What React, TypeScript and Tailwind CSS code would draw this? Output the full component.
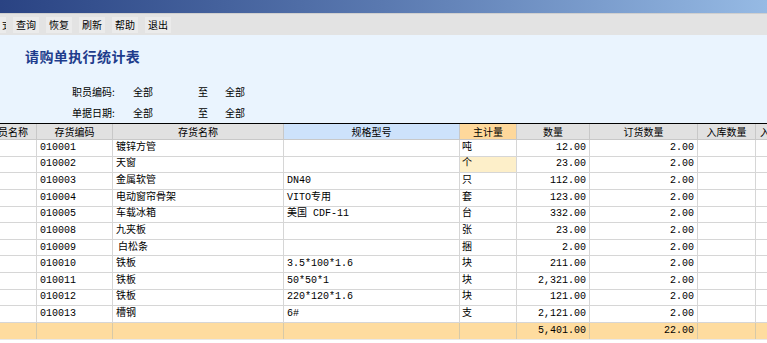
import React from "react"

const cols = ["w-[37px]", "w-[76px]", "w-[171px]", "w-[176px]", "w-[57px]", "w-[73px]", "w-[108px]", "w-[58px]", "w-[60px]"]

const heads = ["职员名称", "存货编码", "存货名称", "规格型号", "主计量", "数量", "订货数量", "入库数量", "入库金额"]

const rows = [
  ["010001", "镀锌方管", "", "吨", "12.00", "2.00"],
  ["010002", "天窗", "", "个", "23.00", "2.00"],
  ["010003", "金属软管", "DN40", "只", "112.00", "2.00"],
  ["010004", "电动窗帘骨架", "VITO专用", "套", "123.00", "2.00"],
  ["010005", "车载冰箱", "美国 CDF-11", "台", "332.00", "2.00"],
  ["010008", "九夹板", "", "张", "23.00", "2.00"],
  ["010009", "白松条", "", "捆", "2.00", "2.00"],
  ["010010", "铁板", "3.5*100*1.6", "块", "211.00", "2.00"],
  ["010011", "铁板", "50*50*1", "块", "2,321.00", "2.00"],
  ["010012", "铁板", "220*120*1.6", "块", "121.00", "2.00"],
  ["010013", "槽钢", "6#", "支", "2,121.00", "2.00"],
]

const tools = ["查询", "恢复", "刷新", "帮助", "退出"]

export default function App() {
  return (
    <div className="w-[767px] h-[343px] overflow-hidden bg-white flex flex-col text-black font-['Noto_Sans_CJK_SC',sans-serif]">
      {/* title bar */}
      <div className="h-[13px] shrink-0 bg-gradient-to-r from-[#2a4383] via-[#5a79b0] to-[#96bae4]" />

      {/* toolbar */}
      <div className="h-[22px] shrink-0 bg-[#e3e3e3] border-t border-[#cfcfcf] flex items-center gap-[7px] text-[10px] leading-none">
        <div className="w-[6px] h-[16px] bg-[#ebebeb] flex items-center justify-end overflow-hidden">
          <span className="shrink-0 -mr-[6px]">式</span>
        </div>
        {tools.map(t => (
          <div key={t} className="w-[26px] h-[16px] bg-[#ebebeb] flex items-center justify-center">
            {t}
          </div>
        ))}
      </div>

      {/* report header */}
      <div className="h-[88px] shrink-0 bg-[#eaf4fe] flex flex-col">
        <div className="pl-[25px] pt-[12px] text-[14px] font-bold text-[#1e3c8c] leading-[18px] tracking-[0.4px]">请购单执行统计表</div>
        <div className="flex flex-col gap-[9px] mt-[21px] text-[10px] leading-[12px]">
          <div className="flex">
            <span className="ml-[72px] w-[61px]">职员编码:</span>
            <span className="w-[65px]">全部</span>
            <span className="w-[27px]">至</span>
            <span>全部</span>
          </div>
          <div className="flex">
            <span className="ml-[72px] w-[61px]">单据日期:</span>
            <span className="w-[65px]">全部</span>
            <span className="w-[27px]">至</span>
            <span>全部</span>
          </div>
        </div>
      </div>

      {/* grid */}
      <div className="flex-1 border-t border-black overflow-hidden">
        <div className="flex h-[16px] text-[10px] leading-none">
          {heads.map((h, i) => (
            <div
              key={h}
              className={`${cols[i]} shrink-0 border-r border-b border-[#c8c8c8] flex items-center overflow-hidden ${i === 0 ? "justify-end pr-[8px]" : i === 8 ? "justify-start pl-[4px]" : "justify-center"} ${i === 3 ? "bg-[#cde2fb]" : i === 4 ? "bg-[#fed89b]" : "bg-[#e1e1e1]"}`}
            >
              <span className="whitespace-nowrap shrink-0">{i === 0 ? "员名称" : h}</span>
            </div>
          ))}
        </div>
        {rows.map((r, ri) => (
          <div key={ri} className="flex h-[16.64px] text-[10px] leading-none font-['Liberation_Mono','Noto_Sans_CJK_SC',monospace]">
            <div className={`${cols[0]} shrink-0 border-r border-b border-[#d6d6d6]`} />
            <div className={`${cols[1]} shrink-0 border-r border-b border-[#d6d6d6] flex items-center pl-[3px]`}>{r[0]}</div>
            <div className={`${cols[2]} shrink-0 border-r border-b border-[#d6d6d6] flex items-center ${ri === 6 ? "pl-[5px]" : "pl-[3px]"}`}>{r[1]}</div>
            <div className={`${cols[3]} shrink-0 border-r border-b border-[#d6d6d6] flex items-center pl-[3px]`}>{r[2]}</div>
            <div className={`${cols[4]} shrink-0 border-r border-b border-[#d6d6d6] flex items-center pl-[2px] ${ri === 1 ? "bg-[#fdefc9]" : ""}`}>{r[3]}</div>
            <div className={`${cols[5]} shrink-0 border-r border-b border-[#d6d6d6] flex items-center justify-end pr-[3px]`}>{r[4]}</div>
            <div className={`${cols[6]} shrink-0 border-r border-b border-[#d6d6d6] flex items-center justify-end pr-[3px]`}>{r[5]}</div>
            <div className={`${cols[7]} shrink-0 border-r border-b border-[#d6d6d6]`} />
            <div className={`${cols[8]} shrink-0 border-r border-b border-[#d6d6d6]`} />
          </div>
        ))}
        <div className="flex h-[17px] bg-[#fedc9f] text-[10px] leading-none font-['Liberation_Mono',monospace] border-b border-[#e8e8e8]">
          <div className={`${cols[0]} shrink-0 border-r border-[#d6c9a8]`} />
          <div className={`${cols[1]} shrink-0 border-r border-[#d6c9a8]`} />
          <div className={`${cols[2]} shrink-0 border-r border-[#d6c9a8]`} />
          <div className={`${cols[3]} shrink-0 border-r border-[#d6c9a8]`} />
          <div className={`${cols[4]} shrink-0 border-r border-[#d6c9a8]`} />
          <div className={`${cols[5]} shrink-0 border-r border-[#d6c9a8] flex items-center justify-end pr-[3px]`}>5,401.00</div>
          <div className={`${cols[6]} shrink-0 border-r border-[#d6c9a8] flex items-center justify-end pr-[3px]`}>22.00</div>
          <div className={`${cols[7]} shrink-0 border-r border-[#d6c9a8]`} />
          <div className={`${cols[8]} shrink-0`} />
        </div>
      </div>
    </div>
  )
}
